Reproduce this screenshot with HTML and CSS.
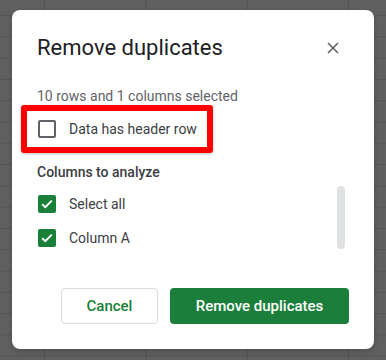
FILE: index.html
```html
<!DOCTYPE html>
<html lang="en">
<head>
  <meta charset="UTF-8">
  <title>Remove duplicates</title>
  <link rel="stylesheet" href="styles.css">
</head>
<body>
  <!-- Dialog over the sheet -->
  <div class="dialog">
    <div class="dialog-head">
      <h1 class="title">Remove duplicates</h1>
      <span class="close">
        <svg width="12" height="12" viewBox="0 0 12 12"><path d="M1 1L11 11M11 1L1 11" stroke="#5f6368" stroke-width="1.6" fill="none"/></svg>
      </span>
    </div>

    <p class="summary">10 rows and 1 columns selected</p>

    <div class="highlight">
      <label class="check-row">
        <span class="box"></span>
        <span class="check-label">Data has header row</span>
      </label>
    </div>

    <h2 class="section">Columns to analyze</h2>

    <div class="columns">
      <div class="column-list">
        <label class="check-row">
          <span class="box checked">
            <svg width="12" height="10" viewBox="0 0 12 10"><path d="M1.2 5.2L4.3 8.2L10.8 1.6" stroke="#fff" stroke-width="2" fill="none"/></svg>
          </span>
          <span class="check-label">Select all</span>
        </label>
        <label class="check-row">
          <span class="box checked">
            <svg width="12" height="10" viewBox="0 0 12 10"><path d="M1.2 5.2L4.3 8.2L10.8 1.6" stroke="#fff" stroke-width="2" fill="none"/></svg>
          </span>
          <span class="check-label">Column A</span>
        </label>
      </div>
      <div class="scrollbar"></div>
    </div>

    <div class="actions">
      <button class="btn btn-cancel">Cancel</button>
      <button class="btn btn-primary">Remove duplicates</button>
    </div>
  </div>
</body>
</html>
```

FILE: styles.css
```css
* {
  box-sizing: border-box;
  margin: 0;
  padding: 0;
}

html, body {
  height: 100%;
}

/* Sheet grid seen through the dark overlay */
body {
  font-family: Roboto, Arial, sans-serif;
  background-color: #606060;
  background-image:
    linear-gradient(to right, #535353 1px, transparent 1px),
    linear-gradient(to bottom, #555 1px, transparent 1px);
  background-size: 101.3px 100%, 100% 21.3px;
  background-position: 44px 0, 0 15px;
  padding: 10px 12px 11px;
  overflow: hidden;
}

.dialog {
  background: #fff;
  border-radius: 8px;
  height: 339px;
  padding: 24px 24px 25px 25px;
  display: flex;
  flex-direction: column;
  box-shadow: 0 2px 6px rgba(0, 0, 0, 0.2);
}

.dialog-head {
  display: flex;
  align-items: center;
  justify-content: space-between;
}

.title {
  font-size: 22px;
  font-weight: 400;
  line-height: 28px;
  color: #202124;
  letter-spacing: 0;
}

.close {
  display: flex;
  margin-right: 11px;
  margin-top: -1px;
}

.summary {
  margin-top: 24px;
  font-size: 14px;
  line-height: 20px;
  color: #5f6368;
}

/* Red annotation box round the header option */
.highlight {
  margin: -1px 0 0 -16px;
  width: 192px;
  border: 6px solid #ff0000;
  border-radius: 3px;
  padding: 4px 0 4px 10px;
  box-shadow: 0 1px 3px rgba(0, 0, 0, 0.25);
}

.check-row {
  display: flex;
  align-items: center;
  height: 28px;
}

.box {
  width: 18px;
  height: 18px;
  border: 2px solid #5f6368;
  border-radius: 2px;
  margin-left: 1px;
  display: flex;
  align-items: center;
  justify-content: center;
}

.box.checked {
  background: #188038;
  border-color: #188038;
}

.check-label {
  margin-left: 13px;
  font-size: 14px;
  color: #3c4043;
}

.section {
  margin-top: 9px;
  font-size: 14px;
  font-weight: 500;
  line-height: 20px;
  color: #3c4043;
}

.columns {
  display: flex;
  justify-content: space-between;
  margin-top: 8px;
}

.column-list {
  display: flex;
  flex-direction: column;
  gap: 6px;
}

.scrollbar {
  width: 8px;
  height: 63px;
  margin-top: -4px;
  margin-right: 5px;
  border-radius: 4px;
  background: #e0e1e3;
}

.actions {
  margin-top: auto;
  display: flex;
  justify-content: flex-end;
  gap: 12px;
  padding-right: 1px;
}

.btn {
  height: 36px;
  border-radius: 4px;
  font-family: Roboto, Arial, sans-serif;
  font-size: 15px;
  font-weight: 500;
  cursor: pointer;
}

.btn-cancel {
  width: 97px;
  background: #fff;
  border: 1px solid #dadce0;
  color: #188038;
}

.btn-primary {
  width: 179px;
  background: #1b7f3b;
  border: none;
  color: #fff;
}
```
